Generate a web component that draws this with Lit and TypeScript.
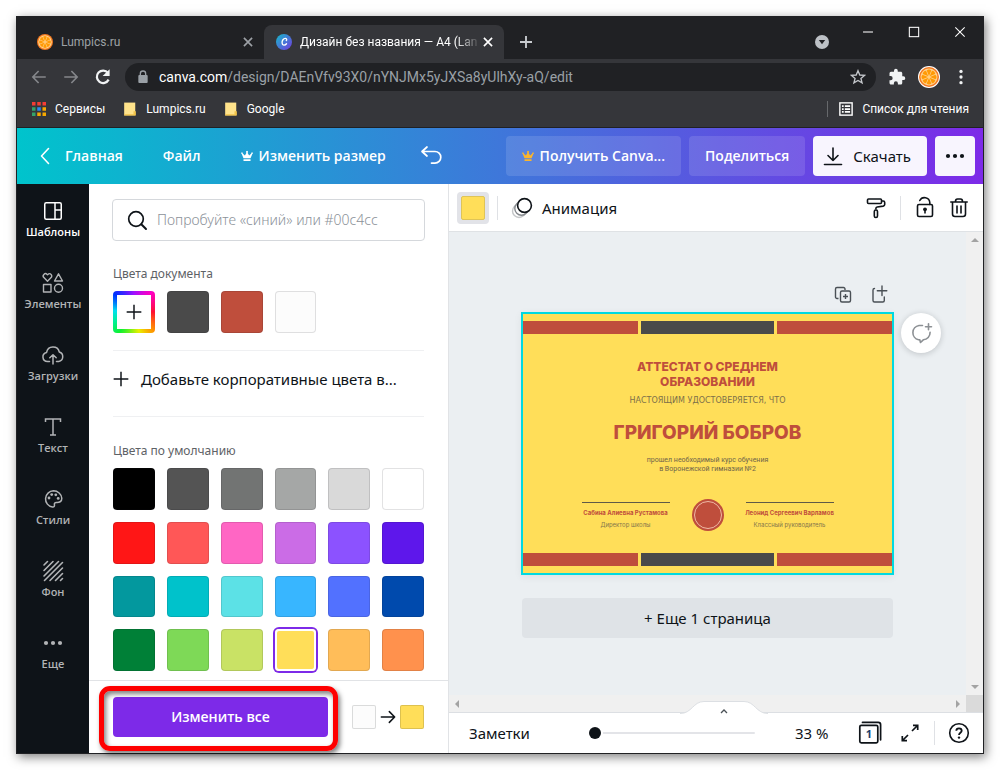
import { LitElement, html, css, svg } from "lit";
import { customElement, property, state } from "lit/decorators.js";

const DOCUMENT_COLORS = ["#4a4a4a", "#bf4e3c", "#fcfcfc"];

const DEFAULT_COLORS = [
  "#000000", "#545454", "#727473", "#a5a7a6", "#d9d9d9", "#ffffff",
  "#ff1616", "#ff5757", "#ff66c4", "#cb6ce6", "#8c52ff", "#5e17eb",
  "#03989e", "#00c2cb", "#5ce1e6", "#38b6ff", "#5271ff", "#004aad",
  "#008037", "#7ed957", "#c9e265", "#ffde59", "#ffbd59", "#ff914d",
];

const SLICES = [0, 45, 90, 135, 180, 225, 270, 315];

const icons = {
  orange: svg`<circle cx="12" cy="12" r="12" fill="#f5791f"/><circle cx="12" cy="12" r="10.200" fill="#ffd08a"/>
    ${SLICES.map((a) => svg`<path d="M12 10.800 9.200 4.200Q12 1.800 14.800 4.200Z" fill="#ff9a05" transform=${`rotate(${a} 12 12)`}/>`)}`,
  canva: svg`<defs><linearGradient id="g" x1="0" y1="0" x2="1" y2="1"><stop offset="0" stop-color="#14bccb"/><stop offset="1" stop-color="#7437e0"/></linearGradient></defs>
    <circle cx="12" cy="12" r="12" fill="url(#g)"/><path d="M15.500 9.800c.8-.6 1-3-1.300-3.200-3-.2-5.400 3.400-5.100 6.700.3 4.200 4.400 4.300 6.700 1.300" fill="none" stroke="#fff" stroke-width="2" stroke-linecap="round"/>`,
  close: svg`<path d="M5 5 19 19M19 5 5 19" stroke="currentColor" stroke-width="2.800" fill="none"/>`,
  plus: svg`<path d="M12 3v18M3 12h18" stroke="currentColor" stroke-width="2.800" fill="none"/>`,
  plusThin: svg`<path d="M12 1v22M1 12h22" stroke="currentColor" stroke-width="2.200" fill="none"/>`,
  drop: svg`<circle cx="12" cy="12" r="12" fill="#bdc1c6"/><path d="M6.500 8.500h11L12 16z" fill="#202124"/>`,
  minimize: svg`<path d="M3.500 12h17" stroke="#fff" stroke-width="1.800"/>`,
  maximize: svg`<rect x="4" y="4" width="16" height="16" stroke="#fff" stroke-width="1.800" fill="none"/>`,
  exit: svg`<path d="M4 4 20 20M20 4 4 20" stroke="#fff" stroke-width="1.800"/>`,
  back: svg`<path d="M21 12H4M11.500 4 3.800 12l7.700 8" stroke="currentColor" stroke-width="2.200" fill="none"/>`,
  forward: svg`<path d="M3 12h17M12.500 4l7.700 8-7.700 8" stroke="currentColor" stroke-width="2.200" fill="none"/>`,
  reload: svg`<path d="M19.500 15.500A8.300 8.300 0 1 1 18.600 6.500" stroke="currentColor" stroke-width="3" fill="none"/><path d="M20.800 1.500v9.300h-9.300z" fill="currentColor"/>`,
  lock: svg`<rect x="5" y="9" width="14" height="12" rx="1.500" fill="currentColor"/><path d="M8 10V7a4 4 0 0 1 8 0v3" fill="none" stroke="currentColor" stroke-width="2"/>`,
  star: svg`<path d="m12 2.500 2.700 6.500 7 .6-5.300 4.500 1.700 6.800L12 17.300l-6.100 3.600 1.700-6.800L2.300 9.600l7-.6z" fill="none" stroke="#c4c7cb" stroke-width="2"/>`,
  puzzle: svg`<path d="M20.500 11H19V7c0-1.100-.9-2-2-2h-4V3.500a2.500 2.500 0 0 0-5 0V5H4a2 2 0 0 0-2 2v3.800h1.500a2.700 2.700 0 0 1 0 5.400H2V20c0 1.100.9 2 2 2h3.800v-1.500a2.700 2.700 0 0 1 5.400 0V22H17a2 2 0 0 0 2-2v-4h1.500a2.500 2.500 0 0 0 0-5z" fill="currentColor"/>`,
  kebab: svg`<circle cx="12" cy="4.500" r="2.200" fill="currentColor"/><circle cx="12" cy="12" r="2.200" fill="currentColor"/><circle cx="12" cy="19.500" r="2.200" fill="currentColor"/>`,
  apps: svg`${["#f53d34", "#f53d34", "#f53d34", "#34a26a", "#2b8af0", "#f6a800", "#34a26a", "#f6a800", "#f6a800"].map(
    (c, i) => svg`<rect x=${(i % 3) * 9} y=${Math.floor(i / 3) * 9} width="6" height="6" fill=${c}/>`)}`,
  folder: svg`<path d="M2 1h19v22H2z" fill="#ffe38b"/><path d="M2 21h17v2H2zM18 16h4v7h-4z" fill="#f2c44a"/>`,
  reading: svg`<rect x="1.500" y="1.500" width="21" height="21" fill="none" stroke="currentColor" stroke-width="2.400"/><path d="M5 5.500h3v3H5zM10 5.500h9v3h-9zM5 10.500h3v3H5zM10 10.500h9v3h-9zM5 15.500h3v3H5zM10 15.500h9v3h-9z" fill="currentColor"/>`,
  chevron: svg`<path d="m15.500 4.500-7 7.500 7 7.500" fill="none" stroke="currentColor" stroke-width="1.600" stroke-linecap="round" stroke-linejoin="round"/>`,
  crown: svg`<g transform="translate(0 2) scale(.86)"><path d="M5 16 1.500 7.500a1.600 1.600 0 1 1 1.900-.8l4.400 3.700L11 5a2 2 0 1 1 2 0l3.200 5.400 4.400-3.700a1.600 1.600 0 1 1 1.900.8L19 16zM5 18h14v3.500H5z" fill="currentColor"/></g>`,
  undo: svg`<path d="M8 3 3 7.500 8 12M3.500 7.500H16a5.800 5.800 0 0 1 0 11.600h-3.500" fill="none" stroke="currentColor" stroke-width="1.700" stroke-linecap="round" stroke-linejoin="round"/>`,
  download: svg`<path d="M12 4v12.500M7 11.500l5 5 5-5" fill="none" stroke="currentColor" stroke-width="1.600" stroke-linecap="round" stroke-linejoin="round"/><path d="M3.500 20.500h17" stroke="currentColor" stroke-width="1.600" stroke-linecap="round"/>`,
  dots: svg`<circle cx="5" cy="12" r="2.100" fill="currentColor"/><circle cx="12" cy="12" r="2.100" fill="currentColor"/><circle cx="19" cy="12" r="2.100" fill="currentColor"/>`,
  templates: svg`<g fill="none" stroke="currentColor" stroke-width="1.500"><rect x="3.750" y="3.750" width="16.500" height="16.500" rx="1.500"/><path d="M14 3.750v16.500M14 11h6.250"/></g>`,
  elements: svg`<g fill="none" stroke="currentColor" stroke-width="1.400" stroke-linejoin="round"><path d="M6.500 10.300 2.900 6.600a2.200 2.200 0 0 1 3.200-3.200l.4.400.4-.4a2.200 2.200 0 0 1 3.200 3.200z"/><path d="m17.500 2.800 4 7.200h-8z"/><rect x="2.500" y="13.500" width="7.500" height="7.500"/><circle cx="17.500" cy="17.250" r="4"/></g>`,
  upload: svg`<g fill="none" stroke="currentColor" stroke-width="1.500" stroke-linecap="round" stroke-linejoin="round"><path d="M8.500 18.500H6.500a4.600 4.600 0 0 1-.9-9.100 6.500 6.500 0 0 1 12.700-.4 4.900 4.900 0 0 1-.6 9.500H15.500M12 21v-9M8.800 14.800 12 11.700l3.200 3.100"/></g>`,
  text: svg`<path d="M4.500 7V4h15v3M12 4v16M9 20h6" fill="none" stroke="currentColor" stroke-width="1.500"/>`,
  styles: svg`<path d="M12.500 3.800a8.200 8.200 0 0 0-1 16.300c1.800.2 2.200-1.200 1.900-2.300-.3-1.500.7-2.500 2-2.400 2.600.2 5.600-.6 5.400-4.100-.2-4.200-4.100-7.500-8.300-7.500z" fill="none" stroke="currentColor" stroke-width="1.500"/><g fill="currentColor"><circle cx="8" cy="11" r="1.400"/><circle cx="10.700" cy="7.600" r="1.400"/><circle cx="14.800" cy="7.800" r="1.400"/><circle cx="17.200" cy="11.400" r="1.400"/></g>`,
  background: svg`<path d="M3 6 6.500 2.500M3 11.500l9-9M3 17 17.500 2.500M3.500 21.500l18-18M9 21.500 21.500 9M14.500 21.500l7-7M19.500 21.500l2-2" stroke="currentColor" stroke-width="1.600" stroke-linecap="round"/>`,
  search: svg`<circle cx="11" cy="11" r="7.300" fill="none" stroke="currentColor" stroke-width="1.700"/><path d="m16.300 16.300 4.700 4.700" stroke="currentColor" stroke-width="2" stroke-linecap="round"/>`,
  arrow: svg`<path d="M2 12h20M14 4l8 8-8 8" fill="none" stroke="currentColor" stroke-width="2.300" stroke-linecap="round" stroke-linejoin="round"/>`,
  animate: svg`<g fill="#fff" stroke-width="1.400"><circle cx="9" cy="15" r="6.500" stroke="#c4c6c8"/><circle cx="11.500" cy="12.500" r="6.700" stroke="#85898d"/><circle cx="14.500" cy="9.500" r="6.900" stroke="#0e1318" stroke-width="1.600"/></g>`,
  roller: svg`<g fill="none" stroke="currentColor" stroke-width="1.600" stroke-linejoin="round"><rect x="3.500" y="3" width="14" height="4.500" rx="1"/><path d="M17.500 5h1.700c1 0 1.500.6 1.500 1.500v2c0 1-.5 1.400-1.500 1.600l-6 .9c-1 .2-1.300.6-1.300 1.500v1"/><rect x="10.300" y="14" width="3.200" height="7.500" rx="1.500"/></g>`,
  unlocked: svg`<g fill="none" stroke="currentColor" stroke-width="1.600" stroke-linecap="round"><rect x="4.500" y="8.500" width="15" height="12" rx="1.500"/><path d="M6.800 4.500a5.300 5.300 0 0 1 10 2V8.500"/></g><circle cx="12" cy="13.300" r="1.900" fill="currentColor"/><path d="M12 13.500v4" stroke="currentColor" stroke-width="1.600"/>`,
  trash: svg`<g fill="none" stroke="currentColor" stroke-width="1.600" stroke-linecap="round"><path d="M3.800 6h16.400M5.500 6v12a2.500 2.500 0 0 0 2.500 2.500h8a2.500 2.500 0 0 0 2.500-2.500V6M8.500 5.500C8.500 3.500 9.500 3 10.500 3h3c1 0 2 .5 2 2.500M10 10v7M14 10v7"/></g>`,
  copy: svg`<g fill="none" stroke="currentColor" stroke-width="1.400" stroke-linejoin="round"><path d="M7.500 15.500h-1.500A1.500 1.500 0 0 1 4.500 14V6A1.500 1.500 0 0 1 6 4.500h6.500A1.500 1.500 0 0 1 14 6V7"/><rect x="9.500" y="8" width="10" height="11" rx="1.500"/><path d="M14.500 11v5M12 13.500h5"/></g>`,
  newPage: svg`<g fill="none" stroke="currentColor" stroke-width="1.400" stroke-linecap="round"><path d="M7.500 5.500A1.500 1.500 0 0 0 6 7v10.500A1.500 1.500 0 0 0 7.500 19h8.300a1.500 1.500 0 0 0 1.500-1.500V14M15 3v9.500M10.300 7.800h9.500"/></g>`,
  comment: svg`<path d="M13.500 4.500H10a7.300 7.300 0 0 0-.5 14.300h1.300l.7 2.700 2.800-2.700a7.300 7.300 0 0 0 6.800-7.500M19.500 2.700v6M16.500 5.700h6" fill="none" stroke="currentColor" stroke-width="1.600" stroke-linecap="round" stroke-linejoin="round"/>`,
  pages: svg`<rect x="1.800" y="4.300" width="18" height="17.500" rx="1.500" fill="none" stroke="currentColor" stroke-width="1.700"/><path d="M4.500 1.400h15.700c1.400 0 2.400 1 2.400 2.400v15" fill="none" stroke="currentColor" stroke-width="1.700" stroke-linecap="round"/>`,
  expand: svg`<path d="M14 10l5.500-5.500M15 4.300h4.700V9M10 14l-5.500 5.500M9 19.700H4.300V15" fill="none" stroke="currentColor" stroke-width="1.700"/>`,
  help: svg`<circle cx="12" cy="12" r="9.300" fill="none" stroke="currentColor" stroke-width="1.600"/><path d="M9.300 9.700C9.400 6.400 14.700 6.600 14.700 9.700c0 2-2.700 2-2.700 4.300" fill="none" stroke="currentColor" stroke-width="1.800"/><circle cx="12" cy="16.600" r="1.200" fill="currentColor"/>`,
};

type IconName = keyof typeof icons;

@customElement("ui-icon")
class UiIcon extends LitElement {
  @property() name: IconName = "plus";

  static styles = css`
    :host { display: inline-flex; flex: none; width: 24px; height: 24px; }
    .glyph { width: 100%; height: 100%; display: block; }
  `;

  render() {
    return html`<svg class="glyph" viewBox="0 0 24 24" aria-hidden="true">${icons[this.name]}</svg>`;
  }
}

const base = css`
  * { box-sizing: border-box; }
  button, input { font: inherit; color: inherit; border: 0; background: none; padding: 0; margin: 0; }
  button { display: inline-flex; align-items: center; justify-content: center; cursor: pointer; white-space: nowrap; }
  a { color: inherit; text-decoration: none; display: inline-flex; align-items: center; white-space: nowrap; }
  .s14 { width: 14px; height: 14px; }
  .s16 { width: 16px; height: 16px; }
  .s18 { width: 18px; height: 18px; }
  .s20 { width: 20px; height: 20px; }
`;

@customElement("browser-chrome")
class BrowserChrome extends LitElement {
  static styles = [base, css`
    :host { display: block; background: #35363a; color: #e8eaed; font: 12px/16px Roboto, "Noto Sans", sans-serif; border-bottom: 1px solid #202124; }
    .tabs { display: flex; height: 42px; padding: 8px 0 0 7px; background: #202124; }
    .tab { display: flex; align-items: center; width: 240px; padding: 0 9px 0 13px; color: #9da1a6; }
    .tab.active { background: #35363a; color: #fff; border-radius: 8px 8px 0 0; padding-left: 12px; }
    .label { flex: 1; min-width: 0; margin: 0 0 0 8px; white-space: nowrap; }
    .tab.active .label { mask-image: linear-gradient(90deg, #000 86%, transparent); }
    .new-tab { width: 28px; margin-left: 8px; color: #c8cbcf; }
    .window-controls { margin-left: auto; display: flex; align-items: flex-start; gap: 32px; padding: 0 16px 0 0; }
    .window-controls button { height: 14px; }
    .window-controls .menu { align-self: center; }
    .toolbar { display: flex; align-items: center; padding: 4px 13px 0 12px; color: #f1f3f4; }
    .nav { display: flex; gap: 12px; padding-right: 12px; }
    .nav button { width: 20px; height: 28px; }
    .muted { color: #85878b; }
    .omnibox { flex: 1; min-width: 0; display: flex; align-items: center; height: 28px; border-radius: 14px; background: #202124; padding: 0 10px; color: #9aa0a6; font-size: 14px; line-height: 20px; white-space: nowrap; }
    .address { flex: 1; min-width: 0; margin-left: 8px; overflow: hidden; }
    .domain { color: #fff; }
    .extras { display: flex; align-items: center; gap: 12px; padding-left: 12px; }
    .avatar { width: 22px; height: 22px; border-radius: 50%; background: #fff; }
    .bookmarks { display: flex; align-items: center; height: 36px; padding: 0 14px 0 15px; gap: 18px; color: #fff; }
    .bookmarks a { gap: 9px; }
    .reading { margin-left: auto; padding-left: 11px; border-left: 1px solid #67696c; }
  `];

  render() {
    return html`
      <div class="tabs">
        <div class="tab">
          <ui-icon class="s16" name="orange"></ui-icon><span class="label">Lumpics.ru</span>
          <button aria-label="Закрыть вкладку"><ui-icon class="s14" name="close"></ui-icon></button>
        </div>
        <div class="tab active">
          <ui-icon class="s16" name="canva"></ui-icon><span class="label">Дизайн без названия — A4 (Lan</span>
          <button aria-label="Закрыть вкладку"><ui-icon class="s14" name="close"></ui-icon></button>
        </div>
        <button class="new-tab" aria-label="Новая вкладка"><ui-icon class="s16" name="plus"></ui-icon></button>
        <div class="window-controls">
          <button class="menu" aria-label="Поиск вкладок"><ui-icon class="s14" name="drop"></ui-icon></button>
          <button aria-label="Свернуть"><ui-icon class="s14" name="minimize"></ui-icon></button>
          <button aria-label="Развернуть"><ui-icon class="s14" name="maximize"></ui-icon></button>
          <button aria-label="Закрыть"><ui-icon class="s14" name="exit"></ui-icon></button>
        </div>
      </div>
      <div class="toolbar">
        <div class="nav">
          <button class="muted" aria-label="Назад"><ui-icon class="s18" name="back"></ui-icon></button>
          <button class="muted" aria-label="Вперед"><ui-icon class="s18" name="forward"></ui-icon></button>
          <button aria-label="Обновить"><ui-icon class="s18" name="reload"></ui-icon></button>
        </div>
        <div class="omnibox">
          <ui-icon class="s16" name="lock"></ui-icon>
          <span class="address"><span class="domain">canva.com</span>/design/DAEnVfv93X0/nYNJMx5yJXSa8yUlhXy-aQ/edit</span>
          <button aria-label="Добавить в закладки"><ui-icon class="s16" name="star"></ui-icon></button>
        </div>
        <div class="extras">
          <button aria-label="Расширения"><ui-icon class="s18" name="puzzle"></ui-icon></button>
          <button class="avatar" aria-label="Профиль"><ui-icon class="s20" name="orange"></ui-icon></button>
          <button aria-label="Меню"><ui-icon class="s18" name="kebab"></ui-icon></button>
        </div>
      </div>
      <div class="bookmarks">
        <a href="#"><ui-icon class="s14" name="apps"></ui-icon>Сервисы</a>
        <a href="#"><ui-icon class="s14" name="folder"></ui-icon>Lumpics.ru</a>
        <a href="#"><ui-icon class="s14" name="folder"></ui-icon>Google</a>
        <a class="reading" href="#"><ui-icon class="s14" name="reading"></ui-icon>Список для чтения</a>
      </div>
    `;
  }
}

@customElement("editor-header")
class EditorHeader extends LitElement {
  static styles = [base, css`
    :host { display: flex; align-items: center; height: 56px; padding: 0 8px 0 16px; color: #fff; background: linear-gradient(90deg, #00c4cc, #7d2ae8); font-family: "Open Sans", sans-serif; font-size: 14px; font-weight: 600; }
    nav { display: flex; gap: 40px; }
    .home { gap: 8px; }
    .resize { gap: 4px; }
    .undo { margin-left: 33px; }
    .actions { display: flex; gap: 8px; margin-left: auto; }
    .actions button { height: 40px; border-radius: 4px; padding: 0 16px; gap: 4px; background: rgba(255, 255, 255, 0.12); }
    .gold { color: #fdb52a; }
    .actions .light { background: #f8f5fe; color: #0e1318; font-family: "Noto Sans", sans-serif; font-size: 15px; font-weight: 400; }
    .actions .download { gap: 8px; padding-left: 8px; }
    .actions .more { width: 40px; padding: 0; }
  `];

  render() {
    return html`
      <nav>
        <a class="home" href="#"><ui-icon name="chevron"></ui-icon>Главная</a>
        <a href="#">Файл</a>
        <a class="resize" href="#"><ui-icon class="s14" name="crown"></ui-icon>Изменить размер</a>
      </nav>
      <button class="undo" aria-label="Отменить"><ui-icon name="undo"></ui-icon></button>
      <div class="actions">
        <button><ui-icon class="s14 gold" name="crown"></ui-icon>Получить Canva...</button>
        <button>Поделиться</button>
        <button class="light download"><ui-icon name="download"></ui-icon>Скачать</button>
        <button class="light more" aria-label="Еще"><ui-icon name="dots"></ui-icon></button>
      </div>
    `;
  }
}

const SECTIONS: { icon: IconName; label: string }[] = [
  { icon: "templates", label: "Шаблоны" },
  { icon: "elements", label: "Элементы" },
  { icon: "upload", label: "Загрузки" },
  { icon: "text", label: "Текст" },
  { icon: "styles", label: "Стили" },
  { icon: "background", label: "Фон" },
  { icon: "dots", label: "Еще" },
];

@customElement("side-nav")
class SideNav extends LitElement {
  @state() private current = "Шаблоны";

  static styles = [base, css`
    :host { display: flex; flex-direction: column; flex: none; width: 72px; background: #0e1318; }
    .item { flex-direction: column; gap: 1px; height: 72px; padding-bottom: 2px; color: #b2b4b6; font-family: "Open Sans", sans-serif; font-size: 11px; line-height: 16px; font-weight: 600; }
    .item.current { color: #fff; }
  `];

  render() {
    return SECTIONS.map((s) => html`
      <button class="item ${s.label === this.current ? "current" : ""}" @click=${() => (this.current = s.label)}>
        <ui-icon name=${s.icon}></ui-icon>${s.label}
      </button>`);
  }
}

@customElement("color-panel")
class ColorPanel extends LitElement {
  @state() private selected = "#ffde59";

  static styles = [base, css`
    :host { display: flex; flex-direction: column; flex: none; width: 360px; background: #fff; border-right: 1px solid #e1e3e6; }
    .scroll { flex: 1; padding: 15px 24px 9px; }
    .search { display: flex; align-items: center; gap: 8px; height: 42px; margin: 0 -1px; padding: 0 12px; border: 1px solid #d5d8dc; border-radius: 4px; font-size: 14px; }
    .search input { flex: 1; min-width: 0; outline: none; }
    .search input::placeholder { color: #8b9199; font-weight: 300; opacity: 1; }
    h2 { margin: 0; font-size: 12px; line-height: 16px; font-weight: 400; color: #5e6266; padding: 0 0 9px; }
    .doc { padding-top: 25px; }
    .defaults { padding-top: 26px; }
    .grid { display: grid; grid-template-columns: repeat(6, 1fr); gap: 12px; }
    .swatch { aspect-ratio: 1; border-radius: 4px; border: 1px solid rgba(14, 19, 24, 0.12); }
    .swatch.selected { border: 0; box-shadow: 0 0 0 2px #7d2ae8, inset 0 0 0 2px #fff; }
    .add-color { aspect-ratio: 1; border-radius: 4px; padding: 4px; background: conic-gradient(#a010ff, #ff00c0 12%, #ff1030 25%, #ff9000 37%, #e8f000 46%, #10f030 60%, #00f090 67%, #00e0f0 76%, #0030ff 87%, #a010ff); }
    .add-inner { display: flex; align-items: center; justify-content: center; width: 100%; height: 100%; background: #fff; }
    .brand { display: flex; justify-content: flex-start; gap: 12px; width: 100%; height: 67px; margin-top: 17px; padding-bottom: 8px; border-top: 1px solid #eff0f2; border-bottom: 1px solid #eff0f2; color: #0e1318; }
    .footer { display: flex; align-items: center; justify-content: space-between; gap: 24px; padding: 16px 24px; border-top: 1px solid #e1e3e6; }
    .apply-wrap { position: relative; flex: 1; display: flex; }
    .apply { flex: 1; height: 40px; border-radius: 4px; background: #7d2ae8; color: #fff; font-family: "Open Sans", sans-serif; font-size: 14px; font-weight: 600; }
    .highlight { position: absolute; inset: -11px -10px -14px -14px; border: 5px solid #fe0000; border-radius: 11px; pointer-events: none; box-shadow: 2px 3px 5px rgba(0, 0, 0, 0.5), inset 2px 3px 5px rgba(0, 0, 0, 0.5); }
    .change { display: flex; align-items: center; gap: 4px; }
    .chip { width: 24px; height: 24px; border-radius: 2px; border: 1px solid rgba(14, 19, 24, 0.14); }
    .from { background: #fcfcfc; }
    .to { background: #ffde59; }
  `];

  private swatch(color: string) {
    return html`<button class="swatch ${color === this.selected ? "selected" : ""}" style="background-color:${color}"
      aria-label=${color} @click=${() => (this.selected = color)}></button>`;
  }

  render() {
    return html`
      <div class="scroll">
        <label class="search"><ui-icon name="search"></ui-icon>
          <input type="search" aria-label="Поиск цвета" placeholder="Попробуйте «синий» или #00c4cc" /></label>
        <section class="doc">
          <h2>Цвета документа</h2>
          <div class="grid">
            <button class="add-color" aria-label="Добавить цвет"><span class="add-inner"><ui-icon name="plusThin" class="s16"></ui-icon></span></button>
            ${DOCUMENT_COLORS.map((c) => this.swatch(c))}
          </div>
        </section>
        <button class="brand"><ui-icon class="s16" name="plusThin"></ui-icon>Добавьте корпоративные цвета в...</button>
        <section class="defaults">
          <h2>Цвета по умолчанию</h2>
          <div class="grid">${DEFAULT_COLORS.map((c) => this.swatch(c))}</div>
        </section>
      </div>
      <div class="footer">
        <div class="apply-wrap"><button class="apply">Изменить все</button><span class="highlight"></span></div>
        <div class="change"><span class="chip from"></span><ui-icon class="s16" name="arrow"></ui-icon><span class="chip to"></span></div>
      </div>
    `;
  }
}

@customElement("certificate-page")
class CertificatePage extends LitElement {
  static styles = [base, css`
    :host { display: block; padding: 7px 0; background: #ffde59; border: 2px solid #00d9e1; color: #bf4e3c; text-align: center; font-family: Inter, sans-serif; box-shadow: 0 2px 8px rgba(14, 19, 24, 0.06); }
    .bars { display: grid; grid-template-columns: 115fr 133fr 115fr; gap: 3px; height: 13px; }
    .bar { background: #bf4e3c; }
    .bar.dark { background: #4a4a4a; }
    .title { margin: 25px auto 6px; max-width: 200px; font-size: 12px; line-height: 15px; font-weight: 800; }
    .note { font-family: "DejaVu Sans", sans-serif; font-size: 8px; line-height: 12px; color: #7d7049; }
    .name { margin: 14px 0 11px; font-size: 19px; line-height: 24px; font-weight: 800; }
    .course { font-family: Roboto, sans-serif; font-size: 7px; line-height: 9px; color: #6f6449; }
    .signatures { display: flex; justify-content: center; gap: 22px; margin: 25px 0 22px; }
    .signature { width: 88px; margin-top: 3px; padding-top: 4px; border-top: 1px solid #5f5a48; font-size: 6px; line-height: 12px; white-space: nowrap; }
    .person { display: flex; justify-content: center; font-weight: 700; }
    .role { color: #85764b; }
    .seal { width: 32px; height: 32px; padding: 2px; border-radius: 50%; background: #bf4e3c; }
    .ring { display: block; height: 28px; border: 1px solid #efb9a5; border-radius: 50%; }
  `];

  private bars() {
    return html`<div class="bars"><span class="bar"></span><span class="bar dark"></span><span class="bar"></span></div>`;
  }

  render() {
    return html`
      ${this.bars()}
      <div class="title">АТТЕСТАТ О СРЕДНЕМ ОБРАЗОВАНИИ</div>
      <div class="note">НАСТОЯЩИМ УДОСТОВЕРЯЕТСЯ, ЧТО</div>
      <div class="name">ГРИГОРИЙ БОБРОВ</div>
      <div class="course">прошел необходимый курс обучения<br />в Воронежской гимназии №2</div>
      <div class="signatures">
        <div class="signature"><div class="person">Сабина Алиевна Рустамова</div><div class="role">Директор школы</div></div>
        <div class="seal"><span class="ring"></span></div>
        <div class="signature"><div class="person">Леонид Сергеевич Варламов</div><div class="role">Классный руководитель</div></div>
      </div>
      ${this.bars()}
    `;
  }
}

@customElement("design-editor")
class DesignEditor extends LitElement {
  static styles = [base, css`
    :host { display: flex; flex-direction: column; flex: 1; min-width: 0; background: #fff; }
    .tools { display: flex; align-items: center; height: 48px; padding: 0 12px 0 8px; border-bottom: 1px solid #dfe2e5; }
    .color { width: 32px; height: 32px; margin-right: 8px; padding: 4px; border-radius: 4px; background: #e2e3e8; }
    .color-fill { width: 24px; height: 24px; border-radius: 2px; background: #ffde59; border: 1px solid #dfc457; }
    .rule { width: 1px; height: 24px; background: #dfe1e5; }
    .animate { gap: 8px; margin-left: 12px; }
    .right { margin-left: auto; display: flex; align-items: center; gap: 12px; }
    .pair { display: flex; gap: 10px; }
    .workspace { flex: 1; display: grid; grid-template-columns: 1fr 17px; grid-template-rows: 1fr 17px; }
    .canvas { display: flex; flex-direction: column; align-items: center; padding: 51px 16px 16px; background: #ebeff2; }
    .sheet { width: 373px; max-width: 100%; }
    .page-tools { display: flex; justify-content: flex-end; gap: 12px; height: 24px; padding-right: 3px; margin-bottom: 5px; color: #4a5056; }
    .page { position: relative; }
    .comment { position: absolute; left: calc(100% + 7px); top: 1px; width: 40px; height: 40px; border-radius: 50%; background: #fff; color: #8c9094; box-shadow: 0 1px 6px rgba(14, 19, 24, 0.2); }
    .add-page { width: calc(100% - 2px); height: 40px; margin: 23px 1px 0; border-radius: 4px; background: #dfe3e7; }
    .scrollbar { display: flex; align-items: center; justify-content: space-between; background: #f0f0f0; padding: 6px; }
    .vertical { flex-direction: column; }
    .corner { background: #dadada; }
    .arrow { border: 4px solid transparent; }
    .arrow-up { border-top: 0; border-bottom-color: #a3a3a3; }
    .arrow-down { border-bottom: 0; border-top-color: #a3a3a3; }
    .arrow-left { border-left: 0; border-right-color: #a3a3a3; }
    .arrow-right { border-right: 0; border-left-color: #a3a3a3; }
    .status { position: relative; display: flex; align-items: center; height: 41px; padding: 0 12px 0 20px; border-top: 1px solid #dcdfe3; }
    .drawer { position: absolute; left: 50%; bottom: 100%; width: 88px; height: 20px; margin: 0 0 -8px -36px; }
    .drawer svg { display: block; width: 88px; height: 20px; }
    .zoom { width: 166px; margin-left: 59px; height: 12px; appearance: none; }
    .zoom::-webkit-slider-runnable-track { height: 2px; border-radius: 1px; background: #e3e4e8; }
    .zoom::-webkit-slider-thumb { appearance: none; width: 12px; height: 12px; margin-top: -5px; border-radius: 50%; background: #0e1318; box-shadow: 0 0 0 2px #fff; }
    .percent { margin-left: 40px; }
    .controls { margin-left: auto; display: flex; align-items: center; gap: 12px; }
    .controls button { width: 24px; height: 24px; }
    .views { display: flex; gap: 16px; }
    .pages { display: grid; }
    .pages > * { grid-area: 1 / 1; place-self: center; }
    .count { font-size: 11px; line-height: 12px; font-weight: 700; padding: 2px 2px 0 0; color: #1b3f6b; }
  `];

  render() {
    return html`
      <div class="tools">
        <button class="color" aria-label="Цвет фона"><span class="color-fill"></span></button>
        <span class="rule"></span>
        <button class="animate"><ui-icon name="animate"></ui-icon>Анимация</button>
        <div class="right">
          <button aria-label="Скопировать стиль"><ui-icon name="roller"></ui-icon></button>
          <span class="rule"></span>
          <div class="pair">
            <button aria-label="Заблокировать"><ui-icon name="unlocked"></ui-icon></button>
            <button aria-label="Удалить"><ui-icon name="trash"></ui-icon></button>
          </div>
        </div>
      </div>
      <div class="workspace">
        <div class="canvas">
          <div class="sheet">
            <div class="page-tools">
              <button aria-label="Копировать страницу"><ui-icon name="copy"></ui-icon></button>
              <button aria-label="Добавить страницу"><ui-icon name="newPage"></ui-icon></button>
            </div>
            <div class="page">
              <certificate-page></certificate-page>
              <button class="comment" aria-label="Комментировать"><ui-icon name="comment"></ui-icon></button>
            </div>
            <button class="add-page">+ Еще 1 страница</button>
          </div>
        </div>
        <div class="scrollbar vertical"><span class="arrow arrow-up"></span><span class="arrow arrow-down"></span></div>
        <div class="scrollbar"><span class="arrow arrow-left"></span><span class="arrow arrow-right"></span></div>
        <div class="corner"></div>
      </div>
      <div class="status">
        <button class="drawer" aria-label="Показать страницы">
          <svg viewBox="0 0 88 20" aria-hidden="true">
            <path d="M0 12.500C12 12.500 13 .5 24 .5h40C75 .5 76 12.500 88 12.500V14H0z" fill="#fff"/>
            <path d="M0 12.500C12 12.500 13 .5 24 .5h40C75 .5 76 12.500 88 12.500" fill="none" stroke="#dcdfe3"/>
            <path d="m41 12 3-3 3 3" fill="none" stroke="#4a5056" stroke-width="1.300"/>
          </svg>
        </button>
        <button>Заметки</button>
        <input class="zoom" type="range" min="33" max="500" value="33" aria-label="Масштаб" />
        <button class="percent">33 %</button>
        <div class="controls">
          <div class="views">
            <button class="pages" aria-label="Страницы"><ui-icon name="pages"></ui-icon><span class="count">1</span></button>
            <button aria-label="На весь экран"><ui-icon name="expand"></ui-icon></button>
          </div>
          <span class="rule"></span>
          <button aria-label="Справка"><ui-icon name="help"></ui-icon></button>
        </div>
      </div>
    `;
  }
}

@customElement("app-root")
class AppRoot extends LitElement {
  static styles = [base, css`
    :host { display: flex; box-sizing: border-box; min-height: 100vh; padding: 16px; background: #fff; color: #0e1318; font: 15px/20px "Noto Sans", "Open Sans", sans-serif; }
    .window { flex: 1; min-width: 0; display: flex; flex-direction: column; border: 1px solid #202124; box-shadow: 2px 3px 10px rgba(0, 0, 0, 0.5); }
    .body { flex: 1; display: flex; }
  `];

  render() {
    return html`
      <div class="window">
        <browser-chrome></browser-chrome>
        <editor-header></editor-header>
        <main class="body">
          <side-nav></side-nav>
          <color-panel></color-panel>
          <design-editor></design-editor>
        </main>
      </div>
    `;
  }
}
